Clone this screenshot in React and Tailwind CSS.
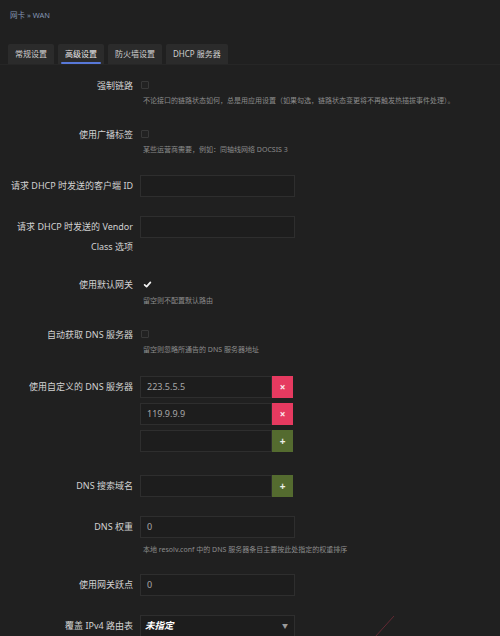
import React from 'react';

const Label = ({ children }) => (
  <div className="w-[133px] shrink-0 text-right text-[9px] leading-[22px] text-[#d2d2d2]">{children}</div>
);

const Desc = ({ children, className = '' }) => (
  <div className={`pl-[3px] text-[7px] leading-[12px] text-[#8c8c8c] whitespace-nowrap ${className}`}>{children}</div>
);

const Checkbox = ({ checked }) =>
  checked ? (
    <svg width="9" height="9" viewBox="0 0 10 10" className="ml-[3px]">
      <path d="M1.8 5.4 L4 7.4 L8.2 2.6" stroke="#f2f2f2" strokeWidth="1.9" fill="none" strokeLinecap="round" strokeLinejoin="round" />
    </svg>
  ) : (
    <div className="w-[8px] h-[8px] ml-[1px] border border-[#383838] bg-[#222] rounded-[1px]" />
  );

const Input = ({ value, w = 'w-[155px]' }) => (
  <div className={`${w} h-[22px] border border-[#2e2e2e] bg-[#1d1d1d] px-[6px] flex items-center text-[9px] text-[#a8a8a8]`}>
    {value}
  </div>
);

const DynInput = ({ value, add }) => (
  <div className="flex">
    <Input value={value} w="w-[132px]" />
    <div
      className={`w-[21px] h-[22px] flex items-center justify-center text-[10px] font-bold text-white/90 ${
        add ? 'bg-[#546b2f]' : 'bg-[#e63a60]'
      }`}
    >
      {add ? '+' : '×'}
    </div>
  </div>
);

const Row = ({ label, mt, children }) => (
  <div className="flex items-start" style={{ marginTop: mt }}>
    <Label>{label}</Label>
    <div className="ml-[7px] flex flex-col">{children}</div>
  </div>
);

const Tab = ({ children, active }) => (
  <div
    className={`relative h-[20px] px-[7px] flex items-center bg-[#2b2b2b] rounded-t-[2px] text-[8px] ${
      active ? 'text-[#e8e8e8]' : 'text-[#cfcfcf]'
    }`}
  >
    {children}
    {active && <div className="absolute left-[3px] right-[3px] bottom-0 h-[2px] bg-[#5878d8] rounded-full" />}
  </div>
);

export default function App() {
  return (
    <div
      className="relative w-[500px] h-[636px] overflow-hidden bg-[#202020]"
      style={{ fontFamily: '"Noto Sans", "Noto Sans CJK SC", sans-serif' }}
    >
      <div className="pt-[9px] pl-[10px] text-[7.5px] leading-[12px] text-[#8496b4]">网卡 » WAN</div>

      <div className="mt-[23px] px-[8px] flex gap-[4px] border-b border-[#262626]">
        <Tab>常规设置</Tab>
        <Tab active>高级设置</Tab>
        <Tab>防火墙设置</Tab>
        <Tab>DHCP 服务器</Tab>
      </div>

      <Row label="强制链路" mt="10px">
        <div className="h-[20px] flex items-center"><Checkbox /></div>
        <Desc>不论接口的链路状态如何，总是用应用设置（如果勾选，链路状态变更将不再触发热插拔事件处理）。</Desc>
      </Row>

      <Row label="使用广播标签" mt="17px">
        <div className="h-[20px] flex items-center"><Checkbox /></div>
        <Desc>某些运营商需要，例如：同轴线网络 DOCSIS 3</Desc>
      </Row>

      <Row label="请求 DHCP 时发送的客户端 ID" mt="19px">
        <Input />
      </Row>

      <div className="flex items-start mt-[19px]">
        <div className="w-[133px] shrink-0 text-right text-[9px] leading-[20px] text-[#d2d2d2] pt-[1px]">
          请求 DHCP 时发送的 Vendor
          <br />
          Class 选项
        </div>
        <div className="ml-[7px]"><Input /></div>
      </div>

      <Row label="使用默认网关" mt="17px">
        <div className="h-[21px] flex items-center"><Checkbox checked /></div>
        <Desc>留空则不配置默认路由</Desc>
      </Row>

      <Row label="自动获取 DNS 服务器" mt="17px">
        <div className="h-[20px] flex items-center"><Checkbox /></div>
        <Desc>留空则忽略所通告的 DNS 服务器地址</Desc>
      </Row>

      <Row label="使用自定义的 DNS 服务器" mt="20px">
        <div className="flex flex-col gap-[5px]">
          <DynInput value="223.5.5.5" />
          <DynInput value="119.9.9.9" />
          <DynInput add />
        </div>
      </Row>

      <Row label="DNS 搜索域名" mt="23px">
        <DynInput add />
      </Row>

      <Row label="DNS 权重" mt="19px">
        <Input value="0" />
        <Desc className="mt-[6px]">本地 resolv.conf 中的 DNS 服务器条目主要按此处指定的权重排序</Desc>
      </Row>

      <Row label="使用网关跃点" mt="18px">
        <Input value="0" />
      </Row>

      <Row label="覆盖 IPv4 路由表" mt="19px">
        <div className="w-[155px] h-[22px] border border-[#2e2e2e] bg-[#1d1d1d] pl-[4px] pr-[6px] flex items-center justify-between">
          <span className="text-[9.5px] font-bold italic text-white">未指定</span>
          <span className="text-[6px] text-[#9a9a9a]">▼</span>
        </div>
      </Row>

      <svg className="absolute left-[370px] top-[612px]" width="30" height="26" viewBox="0 0 30 26">
        <line x1="5" y1="25" x2="24" y2="4" stroke="#8a3040" strokeWidth="0.8" opacity="0.8" />
      </svg>
    </div>
  );
}
